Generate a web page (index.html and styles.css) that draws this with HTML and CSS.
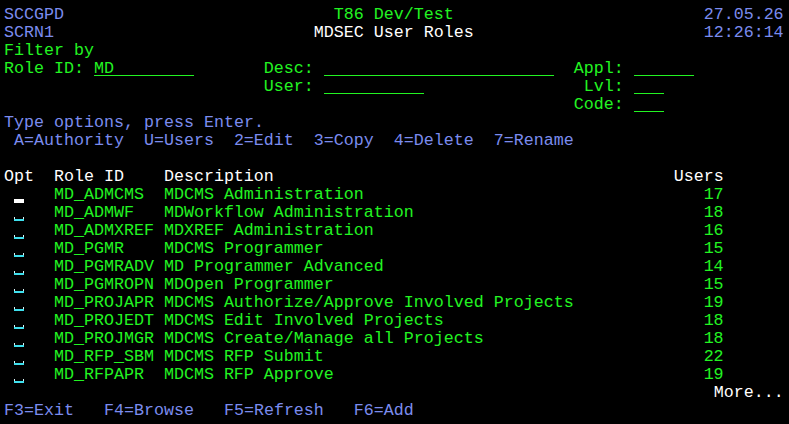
FILE: index.html
```html
<!DOCTYPE html>
<html lang="en">
<head>
    <meta charset="UTF-8">
    <title>MDSEC User Roles</title>
    <link rel="stylesheet" href="styles.css">
</head>
<body>

<div class="screen">
    <!-- header -->
    <div class="title-row">
        <span class="blue">SCCGPD</span>
        <span class="green">T86 Dev/Test</span>
        <span class="blue right">27.05.26</span>
    </div>
    <div class="title-row">
        <span class="blue">SCRN1</span>
        <span class="white">MDSEC User Roles</span>
        <span class="blue right">12:26:14</span>
    </div>

    <!-- filter -->
    <div class="line green">Filter by</div>
    <div class="filter green">
        <span>Role ID:</span>
        <span><span class="fld">MD        </span></span>
        <span>Desc:</span>
        <span><span class="fld">                       </span></span>
        <span class="lbl">Appl:</span>
        <span><span class="fld">      </span></span>

        <span></span>
        <span></span>
        <span>User:</span>
        <span><span class="fld">          </span></span>
        <span class="lbl">Lvl:</span>
        <span><span class="fld">   </span></span>

        <span></span>
        <span></span>
        <span></span>
        <span></span>
        <span class="lbl">Code:</span>
        <span><span class="fld">   </span></span>
    </div>

    <div class="line blue">Type options, press Enter.</div>
    <div class="options blue">
        <span>A=Authority</span>
        <span>U=Users</span>
        <span>2=Edit</span>
        <span>3=Copy</span>
        <span>4=Delete</span>
        <span>7=Rename</span>
    </div>
    <div class="line"></div>

    <!-- list -->
    <div class="list">
        <div class="list-row white">
            <span>Opt</span><span>Role ID</span><span>Description</span><span class="num">Users</span>
        </div>
        <div class="list-row green">
            <span class="opt-cell"><span class="opt cursor"></span></span><span>MD_ADMCMS</span><span>MDCMS Administration</span><span class="num">17</span>
        </div>
        <div class="list-row green">
            <span class="opt-cell"><span class="opt"></span></span><span>MD_ADMWF</span><span>MDWorkflow Administration</span><span class="num">18</span>
        </div>
        <div class="list-row green">
            <span class="opt-cell"><span class="opt"></span></span><span>MD_ADMXREF</span><span>MDXREF Administration</span><span class="num">16</span>
        </div>
        <div class="list-row green">
            <span class="opt-cell"><span class="opt"></span></span><span>MD_PGMR</span><span>MDCMS Programmer</span><span class="num">15</span>
        </div>
        <div class="list-row green">
            <span class="opt-cell"><span class="opt"></span></span><span>MD_PGMRADV</span><span>MD Programmer Advanced</span><span class="num">14</span>
        </div>
        <div class="list-row green">
            <span class="opt-cell"><span class="opt"></span></span><span>MD_PGMROPN</span><span>MDOpen Programmer</span><span class="num">15</span>
        </div>
        <div class="list-row green">
            <span class="opt-cell"><span class="opt"></span></span><span>MD_PROJAPR</span><span>MDCMS Authorize/Approve Involved Projects</span><span class="num">19</span>
        </div>
        <div class="list-row green">
            <span class="opt-cell"><span class="opt"></span></span><span>MD_PROJEDT</span><span>MDCMS Edit Involved Projects</span><span class="num">18</span>
        </div>
        <div class="list-row green">
            <span class="opt-cell"><span class="opt"></span></span><span>MD_PROJMGR</span><span>MDCMS Create/Manage all Projects</span><span class="num">18</span>
        </div>
        <div class="list-row green">
            <span class="opt-cell"><span class="opt"></span></span><span>MD_RFP_SBM</span><span>MDCMS RFP Submit</span><span class="num">22</span>
        </div>
        <div class="list-row green">
            <span class="opt-cell"><span class="opt"></span></span><span>MD_RFPAPR</span><span>MDCMS RFP Approve</span><span class="num">19</span>
        </div>
    </div>
    <div class="line white more">More...</div>

    <!-- function keys -->
    <div class="fkeys blue">
        <span>F3=Exit</span>
        <span>F4=Browse</span>
        <span>F5=Refresh</span>
        <span>F6=Add</span>
    </div>
</div>

</body>
</html>
```

FILE: styles.css
```css
        body {
            margin: 0;
            background-color: #000;
            font-family: 'Liberation Mono', 'DejaVu Sans Mono', monospace;
            font-size: 16.667px;
            line-height: 18px;
        }
        .screen {
            width: 78ch;
            padding: 6px 0 0 4px;
        }
        .blue {
            color: #7b8cee;
        }
        .green {
            color: #22f422;
        }
        .white {
            color: #ffffff;
        }
        .line {
            height: 18px;
            white-space: pre;
        }
        .title-row {
            display: grid;
            grid-template-columns: 1fr auto 1fr;
            height: 18px;
        }
        .right {
            text-align: right;
        }

        /* 过滤条件 */
        .filter {
            display: grid;
            grid-template-columns: 9ch 17ch 6ch 25ch 6ch 1fr;
            grid-auto-rows: 18px;
        }
        .filter .lbl {
            text-align: right;
            padding-right: 1ch;
        }
        .fld {
            display: inline-block;
            vertical-align: top;
            height: 18px;
            white-space: pre;
            background: linear-gradient(#22f422, #22f422) 0 15px / 100% 1px no-repeat;
        }
        .options {
            display: flex;
            gap: 2ch;
            padding-left: 1ch;
            height: 18px;
        }

        /* 列表 */
        .list-row {
            display: grid;
            grid-template-columns: 5ch 11ch 51ch 5ch;
            height: 18px;
            white-space: pre;
        }
        .num {
            text-align: right;
        }
        .opt-cell {
            padding-left: 1ch;
        }
        .opt {
            display: inline-block;
            vertical-align: top;
            width: 10px;
            height: 18px;
            background:
                linear-gradient(#d8f4f6, #d8f4f6) 0 13px / 1px 2px no-repeat,
                linear-gradient(#d8f4f6, #d8f4f6) 9px 13px / 1px 2px no-repeat,
                linear-gradient(#3fe0ee, #3fe0ee) 0 15px / 10px 2px no-repeat;
        }
        .opt.cursor {
            background:
                linear-gradient(#ffffff, #ffffff) 0 13px / 10px 4px no-repeat;
        }
        .more {
            text-align: right;
        }
        .fkeys {
            display: flex;
            gap: 3ch;
            height: 18px;
        }
```
